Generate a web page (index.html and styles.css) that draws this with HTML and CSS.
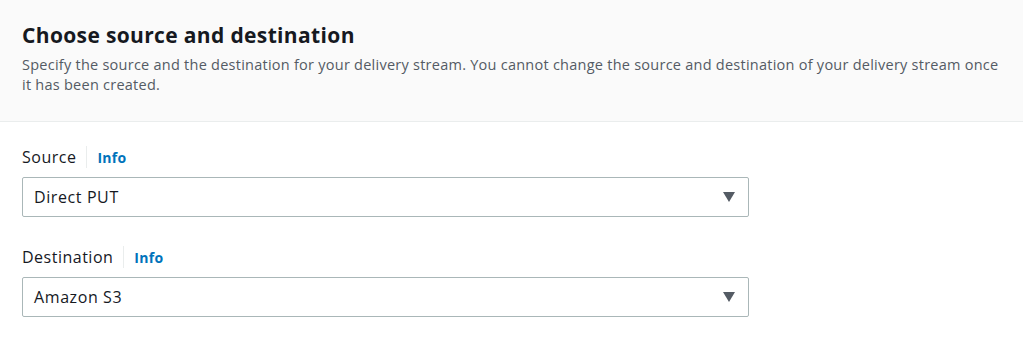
FILE: index.html
```html
<!DOCTYPE html>
<html>
<head lang="en">
    <meta charset="UTF-8">
    <title>Choose source and destination</title>
    <link rel="stylesheet" href="styles.css">
</head>
<body>
<div id="panel">
    <div class="panel-header">
        <h2>Choose source and destination</h2>
        <p>Specify the source and the destination for your delivery stream. You cannot change the source and destination of your delivery stream once it has been created.</p>
    </div>
    <div class="panel-body">
        <div class="field">
            <div class="field-label">
                <span class="label-text">Source</span>
                <a class="info" href="#">Info</a>
            </div>
            <div class="select">
                <span>Direct PUT</span>
                <i class="caret"></i>
            </div>
        </div>
        <div class="field">
            <div class="field-label">
                <span class="label-text">Destination</span>
                <a class="info" href="#">Info</a>
            </div>
            <div class="select">
                <span>Amazon S3</span>
                <i class="caret"></i>
            </div>
        </div>
    </div>
</div>
</body>
</html>
```

FILE: styles.css
```css
*{
    margin: 0;
    padding: 0;
    box-sizing: border-box;
}
body{
    font-family: "Open Sans", "Noto Sans", sans-serif;
    color: #16191f;
    background: #ffffff;
}
.panel-header{
    background: #fafafa;
    border-bottom: 1px solid #eaeded;
    height: 122px;
    padding: 21px 18px 0 22px;
}
.panel-header h2{
    font-size: 21px;
    font-weight: 700;
    line-height: 28px;
    letter-spacing: 0.35px;
}
.panel-header p{
    margin-top: 6px;
    font-size: 14.5px;
    line-height: 20px;
    color: #545b64;
    letter-spacing: 0.25px;
}
.panel-body{
    padding: 23px 22px 0 22px;
}
.field{
    width: 727px;
    margin-bottom: 28px;
}
.field-label{
    display: flex;
    align-items: center;
    height: 24px;
    margin-bottom: 8px;
}
.label-text{
    font-size: 16px;
    line-height: 22px;
    padding-right: 10px;
    border-right: 1px solid #eaeded;
    letter-spacing: 0.5px;
}
.info{
    font-size: 14px;
    font-weight: 700;
    color: #0073bb;
    text-decoration: none;
    padding-left: 10px;
    letter-spacing: 0.3px;
}
.select{
    height: 40px;
    border: 1px solid #aab7b8;
    border-radius: 2px;
    display: flex;
    align-items: center;
    justify-content: space-between;
    padding: 0 13px 0 11px;
    font-size: 16px;
    letter-spacing: 0.6px;
}
.caret{
    width: 0;
    height: 0;
    border-left: 6.5px solid transparent;
    border-right: 6.5px solid transparent;
    border-top: 10px solid #545b64;
}
```
